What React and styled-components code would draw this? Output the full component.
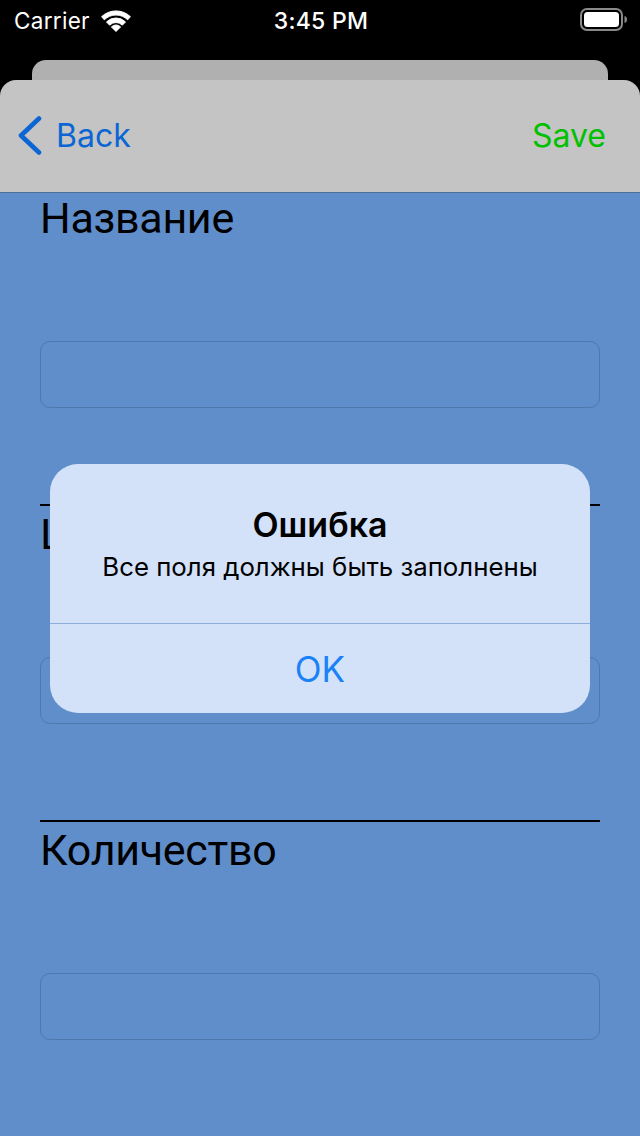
import styled, { createGlobalStyle } from "styled-components";

const GlobalStyle = createGlobalStyle`
  html, body {
    margin: 0;
    padding: 0;
    background: #000;
  }
  * {
    box-sizing: border-box;
  }
`;

const FIELDS = [
  { id: "name", label: "Название", divider: false },
  { id: "price", label: "Цена", divider: true },
  { id: "count", label: "Количество", divider: true }
];

const StyledScreen = styled.div`
  position: relative;
  width: 640px;
  height: 1136px;
  display: flex;
  flex-direction: column;
  background: #000;
  overflow: hidden;
  font-family: Inter, "Noto Sans", sans-serif;
`;

const StyledStatusBar = styled.div`
  height: 60px;
  display: grid;
  grid-template-columns: 1fr auto 1fr;
  align-items: start;
  padding: 7px 12px 0 14px;
  color: #fff;
`;

const StyledCarrier = styled.div`
  display: flex;
  align-items: center;
  gap: 11px;
  font-size: 22.5px;
  line-height: 28px;
  letter-spacing: 0.3px;
`;

const StyledTime = styled.div`
  font-size: 23px;
  line-height: 28px;
  font-weight: 500;
  letter-spacing: 0.3px;
`;

const StyledBattery = styled.div`
  justify-self: end;
  margin-top: 1px;
  display: flex;
`;

const StyledBackCard = styled.div`
  height: 20px;
  margin: 0 32px;
  background: #b0b0b0;
  border-radius: 14px 14px 0 0;
`;

const StyledNavBar = styled.div`
  height: 113px;
  display: flex;
  align-items: center;
  justify-content: space-between;
  padding: 0 34px 0 18px;
  background: #c4c4c4;
  border-radius: 16px 16px 0 0;
  border-bottom: 1px solid #4d6f9c;
`;

const StyledNavButton = styled.button`
  display: flex;
  align-items: center;
  gap: 14px;
  margin: 0;
  padding: 0;
  border: none;
  background: none;
  font-family: inherit;
  font-size: 32px;
  line-height: 40px;
  color: ${(props) => props.color};
  cursor: pointer;
`;

const StyledContent = styled.div`
  flex: 1;
  padding: 1px 40px 0;
  background: #5f8ecb;
`;

const StyledSection = styled.div`
  display: flex;
  flex-direction: column;
`;

const StyledDivider = styled.div`
  height: 2px;
  margin-bottom: 4px;
  background: #000;
`;

const StyledLabel = styled.div`
  font-family: Roboto, "Liberation Sans", sans-serif;
  font-size: 43px;
  line-height: 49px;
  color: #000;
  letter-spacing: -0.3px;
`;

const StyledInput = styled.div`
  height: 67px;
  margin: 98px 0 96px;
  border: 1px solid #4f78ae;
  border-radius: 10px;
`;

const StyledAlert = styled.div`
  position: absolute;
  top: 464px;
  left: 50px;
  width: 540px;
  height: 249px;
  display: flex;
  flex-direction: column;
  background: #d3e2f9;
  border-radius: 28px;
  overflow: hidden;
`;

const StyledAlertBody = styled.div`
  height: 160px;
  padding-top: 40px;
  text-align: center;
  border-bottom: 1px solid #8eaedb;
`;

const StyledAlertTitle = styled.div`
  font-size: 34px;
  line-height: 41px;
  font-weight: 600;
  color: #000;
`;

const StyledAlertMessage = styled.div`
  margin-top: 7px;
  font-size: 25.8px;
  line-height: 30px;
  color: #000;
`;

const StyledAlertButton = styled.div`
  flex: 1;
  display: flex;
  align-items: center;
  justify-content: center;
  font-size: 35px;
  color: #1a82f6;
`;

const WifiIcon = () => (
  <svg width="30" height="22" viewBox="0 0 30 22" fill="#fff" stroke="#fff" strokeWidth="1" strokeLinejoin="round">
    <path d="M15 21.5 L10.4 16.9 A6.5 6.5 0 0 1 19.6 16.9 Z" />
    <path d="M5.45 11.95 A13.5 13.5 0 0 1 24.55 11.95 L21.36 15.14 A9 9 0 0 0 8.64 15.14 Z" />
    <path d="M0.6 6.65 A21 21 0 0 1 29.4 6.65 L26.67 9.83 A16.5 16.5 0 0 0 3.33 9.83 Z" />
  </svg>
);

const BatteryIcon = () => (
  <svg width="48" height="24" viewBox="0 0 48 24">
    <rect x="1" y="1" width="41" height="21" rx="6" fill="none" stroke="#8a8a8a" strokeWidth="2" />
    <rect x="4" y="4" width="35" height="15" rx="3.5" fill="#fff" />
    <path d="M44.5 8 Q47 8.5 47 11.5 Q47 14.5 44.5 15 Z" fill="#8a8a8a" />
  </svg>
);

const ChevronIcon = () => (
  <svg width="24" height="40" viewBox="0 0 24 40" fill="none">
    <path d="M21 2.5 L3 19.5 L21 36.5" stroke="#0b66d4" strokeWidth="4.6" strokeLinecap="round" strokeLinejoin="round" />
  </svg>
);

const FormSection = (props) => {
  const { label, divider } = props;

  return (
    <StyledSection>
      {divider && <StyledDivider />}
      <StyledLabel>{label}</StyledLabel>
      <StyledInput />
    </StyledSection>
  );
};

const App = () => (
  <StyledScreen>
    <GlobalStyle />
    <StyledStatusBar>
      <StyledCarrier>
        Carrier
        <WifiIcon />
      </StyledCarrier>
      <StyledTime>3:45 PM</StyledTime>
      <StyledBattery>
        <BatteryIcon />
      </StyledBattery>
    </StyledStatusBar>

    <StyledBackCard />
    <StyledNavBar>
      <StyledNavButton color="#0b66d4">
        <ChevronIcon />
        Back
      </StyledNavButton>
      <StyledNavButton color="#00c000">Save</StyledNavButton>
    </StyledNavBar>

    <StyledContent>
      {FIELDS.map((field) => (
        <FormSection key={field.id} label={field.label} divider={field.divider} />
      ))}
    </StyledContent>

    <StyledAlert>
      <StyledAlertBody>
        <StyledAlertTitle>Ошибка</StyledAlertTitle>
        <StyledAlertMessage>Все поля должны быть заполнены</StyledAlertMessage>
      </StyledAlertBody>
      <StyledAlertButton>OK</StyledAlertButton>
    </StyledAlert>
  </StyledScreen>
);

export default App;
